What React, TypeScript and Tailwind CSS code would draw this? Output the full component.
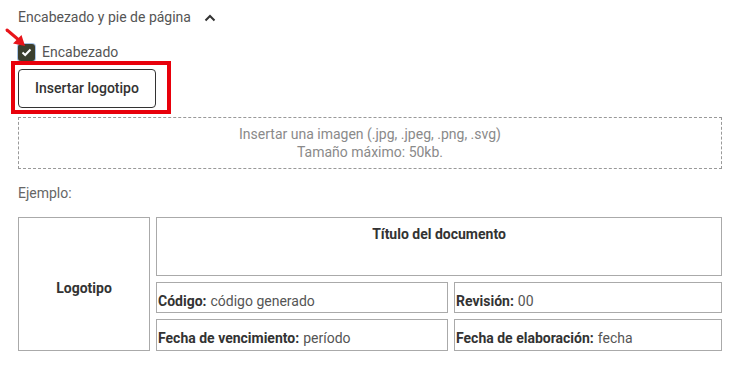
export default function App() {
  return (
    <div
      className="relative min-h-[367px] w-[746px] bg-white pt-[7px] pl-[18px] pr-[24px] text-[14px] text-[#555]"
      style={{ fontFamily: 'Roboto, "Liberation Sans", sans-serif' }}
    >
      {/* section header */}
      <div className="flex h-[20px] items-center gap-[13px]">
        <span className="text-[14px] text-[#555]">Encabezado y pie de página</span>
        <svg width="12" height="8" viewBox="0 0 12 8" className="mt-[1px]">
          <path d="M1.5 6.5 L6 2 L10.5 6.5" fill="none" stroke="#333" strokeWidth="2" />
        </svg>
      </div>

      {/* checkbox */}
      <div className="mt-[17px] flex h-[17px] items-center gap-[7px]">
        <div className="flex h-[17px] w-[17px] items-center justify-center rounded-[3px] bg-[#3b3f2e] ring-1 ring-[#a9c4e8]">
          <svg width="11" height="9" viewBox="0 0 11 9">
            <path d="M1.5 4.5 L4.2 7 L9.5 1.5" fill="none" stroke="#fff" strokeWidth="2" />
          </svg>
        </div>
        <span className="text-[14px] text-[#555]">Encabezado</span>
      </div>

      {/* annotation arrow */}
      <svg
        width="30"
        height="26"
        viewBox="0 0 30 26"
        className="absolute left-[3px] top-[26px]"
      >
        <path d="M4 4 L17 15" stroke="#e8141a" strokeWidth="3" strokeLinecap="round" />
        <path d="M22 20 L10 17.5 L18.5 9 Z" fill="#e8141a" />
      </svg>

      {/* button with red highlight */}
      <div className="ml-[-7px] inline-flex border-[4px] border-[#e8000b] pt-[4px] pl-[3px] pr-[11px] pb-[2px]">
        <button className="flex h-[39px] w-[138px] items-center justify-center rounded-[4px] border border-[#333] bg-white text-[14px] font-medium text-[#333]">
          Insertar logotipo
        </button>
      </div>

      {/* drop zone */}
      <div className="mt-[3px] flex h-[52px] flex-col items-center justify-center border border-dashed border-[#999] text-[14px] leading-[18px] text-[#8a8a8a]">
        <span>Insertar una imagen (.jpg, .jpeg, .png, .svg)</span>
        <span>Tamaño máximo: 50kb.</span>
      </div>

      <div className="mt-[14px] h-[20px] leading-[20px] text-[#666]">Ejemplo:</div>

      {/* example table */}
      <div className="mt-[14px] grid grid-cols-[132px_292px_1fr] grid-rows-[59px_31px_32px] gap-x-[6px] gap-y-[6px] text-[14px] text-[#555]">
        <div className="row-span-3 flex items-center justify-center border border-[#aaa] pt-[8px] font-bold text-[#333]">
          Logotipo
        </div>
        <div className="col-span-2 border border-[#aaa] pt-[6px] text-center font-bold text-[#333]">
          Título del documento
        </div>
        <div className="flex items-center border border-[#aaa] pl-[1px] pt-[6px] leading-[20px]">
          <b className="mr-[4px] text-[#333]">Código:</b>código generado
        </div>
        <div className="flex items-center border border-[#aaa] pl-[1px] pt-[6px] leading-[20px]">
          <b className="mr-[4px] text-[#333]">Revisión:</b>00
        </div>
        <div className="flex items-center border border-[#aaa] pl-[1px] pt-[6px] leading-[20px]">
          <b className="mr-[4px] text-[#333]">Fecha de vencimiento:</b>período
        </div>
        <div className="flex items-center border border-[#aaa] pl-[1px] pt-[6px] leading-[20px]">
          <b className="mr-[4px] text-[#333]">Fecha de elaboración:</b>fecha
        </div>
      </div>
    </div>
  );
}
